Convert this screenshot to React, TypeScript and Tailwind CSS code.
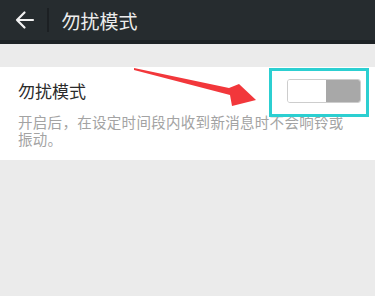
import React from "react";

const font = { fontFamily: '"Noto Sans CJK SC", "Noto Sans", sans-serif' };

function BackIcon() {
  return (
    <svg width="20" height="20" viewBox="0 0 20 20" className="block">
      <path d="M2 10 H18 M9.5 2.5 L2 10 L9.5 17.5" fill="none" stroke="#f2f2f2" strokeWidth="2.2" strokeLinecap="round" strokeLinejoin="round" />
    </svg>
  );
}

export default function App() {
  return (
    <div className="relative w-[375px] h-[296px] bg-[#ebebeb] overflow-hidden" style={font}>
      {/* 顶部栏 */}
      <div className="h-[44px] bg-[#262c2f] border-b-4 border-[#1d2225] flex items-center">
        <div className="w-[47px] flex justify-center pl-[2px]">
          <BackIcon />
        </div>
        <div className="w-[1.5px] h-[24px] bg-[#1c2023]" />
        <h1 className="ml-[13px] text-[19px] text-[#ececec] leading-none">勿扰模式</h1>
      </div>

      {/* 设置项 */}
      <div className="relative mt-[23px] bg-white pl-[18px] pr-[14px] pt-[12px] pb-[13px]">
        <div className="flex justify-between">
          <span className="text-[17px] leading-[23px] text-[#2b2b2b]">勿扰模式</span>
          <div className="flex w-[74px] h-[24px] rounded-[3px] border border-[#cdcdcd] overflow-hidden">
            <div className="w-[38px] bg-white" />
            <div className="flex-1 bg-[#a8a8a8]" />
          </div>
        </div>
        <div className="mt-[10px] flex flex-col text-[14.5px] leading-[17px] tracking-[0.3px] text-[#a3a3a3] whitespace-nowrap">
          <span>开启后，在设定时间段内收到新消息时不会响铃或</span>
          <span>振动。</span>
        </div>
        <div className="absolute left-[269px] top-[1px] w-[100px] h-[49px] border-[3px] border-[#2ccfd1]" />
      </div>

      {/* 标注箭头 */}
      <svg className="absolute left-0 top-0 pointer-events-none" width="375" height="296" viewBox="0 0 375 296">
        <polygon points="134,68 229,88 239,84 256,100 232,106 230,95 134,70" fill="#f2373b" />
      </svg>
    </div>
  );
}
